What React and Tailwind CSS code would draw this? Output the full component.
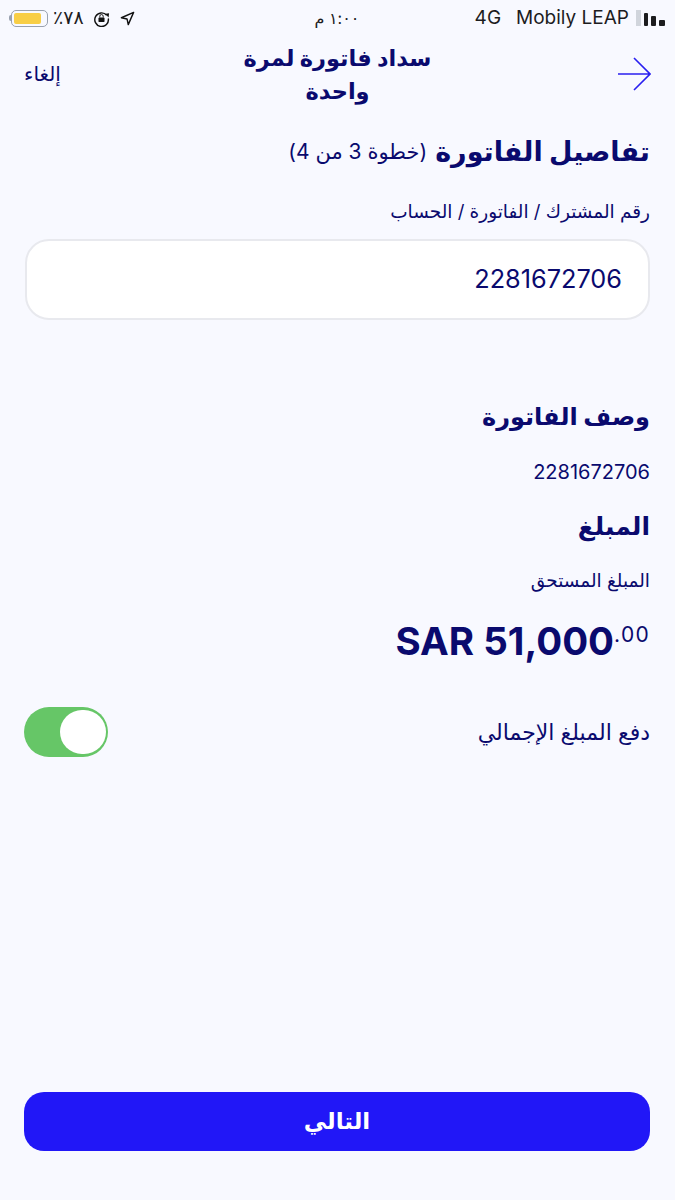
const font = { fontFamily: 'Inter, "DejaVu Sans", sans-serif' }

function Battery() {
  return (
    <div className="flex items-center">
      <div className="h-[6px] w-[2px] rounded-l-sm bg-gray-400" />
      <div className="flex h-[17px] w-[37px] items-center rounded-[5px] border border-gray-400 p-[2px]">
        <div className="h-full w-[27px] rounded-[2px] bg-[#f8ce46]" />
      </div>
    </div>
  )
}

function StatusBar() {
  return (
    <div className="flex h-[36px] items-center justify-between pl-[9px] pr-[10px] text-[#1c1c1e]">
      <div className="flex w-[220px] items-center gap-[5px]">
        <Battery />
        <span className="text-[19px]">٪٧٨</span>
        <svg width="17" height="17" viewBox="0 0 18 18" fill="none" className="ml-[4px]">
          <path d="M14.5 5.5A7.2 7.2 0 1 0 16.2 9" stroke="#111" strokeWidth="1.5" />
          <path d="M13 4l4-.5-.5 4.5z" fill="#111" />
          <rect x="5.8" y="8" width="6.4" height="4.8" rx="1" fill="#111" />
          <path d="M7.2 8V6.6a1.8 1.8 0 0 1 3.6 0V8" stroke="#111" strokeWidth="1" />
        </svg>
        <svg width="15" height="15" viewBox="0 0 16 16" fill="none" className="ml-[5px]">
          <path d="M14.5 1.5 1.5 7.2l6 1.3 1.3 6z" stroke="#111" strokeWidth="1.5" strokeLinejoin="round" />
        </svg>
      </div>
      <span className="text-[16px]" dir="rtl">١:٠٠ م</span>
      <div className="flex w-[220px] items-center justify-end gap-[15px] text-[19px]">
        <span>4G</span>
        <div className="flex items-center gap-[7px]">
          <span>Mobily LEAP</span>
          <div className="flex items-end gap-[3px]">
            <div className="h-[16px] w-[5px] bg-gray-300" />
            <div className="h-[13px] w-[4px] rounded-[1px] bg-[#1c1c1e]" />
            <div className="h-[10px] w-[5px] rounded-[1px] bg-[#1c1c1e]" />
            <div className="h-[6px] w-[6px] rounded-[1px] bg-[#1c1c1e]" />
          </div>
        </div>
      </div>
    </div>
  )
}

function Header() {
  return (
    <div className="flex h-[72px] items-center justify-between px-[24px] pt-[4px]">
      <div className="w-[80px]">
        <svg width="34" height="34" viewBox="0 0 34 34" fill="none" className="text-[#2a1ff0]">
          <path d="M1 17h32M17 1l16 16-16 16" stroke="currentColor" strokeWidth="1.6" />
        </svg>
      </div>
      <h1 className="w-[230px] text-center text-[22.5px] font-bold leading-[33px] text-[#0a0a6e]">
        سداد فاتورة لمرة واحدة
      </h1>
      <div className="w-[80px] text-left text-[20px] text-[#0a0a6e]">إلغاء</div>
    </div>
  )
}

export default function App() {
  return (
    <div dir="rtl" style={font} className="flex h-[1200px] w-[675px] flex-col bg-[#f8f9ff] text-[#0a0a6e]">
      <div dir="ltr">
        <StatusBar />
      </div>
      <div dir="rtl">
        <Header />
      </div>
      <div className="flex flex-1 flex-col px-[25px]">
        <div className="mt-[24px] flex h-[40px] items-center gap-[8px]">
          <h2 className="text-[27px] font-bold">تفاصيل الفاتورة</h2>
          <span className="text-[21px]">(خطوة 3 من 4)</span>
        </div>
        <label className="mt-[26px] text-[18.5px]">رقم المشترك / الفاتورة / الحساب</label>
        <div className="mt-[13px] flex h-[81px] items-center rounded-[24px] border-2 border-[#e8e9ee] bg-white px-[26px] text-[25.3px]">
          2281672706
        </div>
        <h2 className="mt-[79px] text-[24px] font-bold">وصف الفاتورة</h2>
        <p className="mt-[22px] text-[20px]">2281672706</p>
        <h2 className="mt-[21px] text-[25px] font-bold">المبلغ</h2>
        <p className="mt-[22px] text-[18.5px]">المبلغ المستحق</p>
        <div className="mt-[23px] flex" dir="ltr">
          <div className="ml-auto flex items-start text-[38.5px] font-bold leading-[46px]">
            SAR 51,000
            <span className="text-[21px] font-normal leading-[33px] tracking-[1.3px]">.00</span>
          </div>
        </div>
        <div className="mt-[43px] flex items-center justify-between">
          <span className="text-[22px]">دفع المبلغ الإجمالي</span>
          <div className="ml-[-1px] flex h-[50px] w-[84px] items-center justify-end rounded-full bg-[#66c667] py-[3px] pr-[2px]" dir="ltr">
            <div className="h-[44px] w-[46px] rounded-full bg-white" />
          </div>
        </div>
        <button className="mt-auto mb-[49px] ml-[-1px] h-[59px] rounded-[20px] bg-[#2117f7] text-[23px] font-bold text-white">
          التالي
        </button>
      </div>
    </div>
  )
}
